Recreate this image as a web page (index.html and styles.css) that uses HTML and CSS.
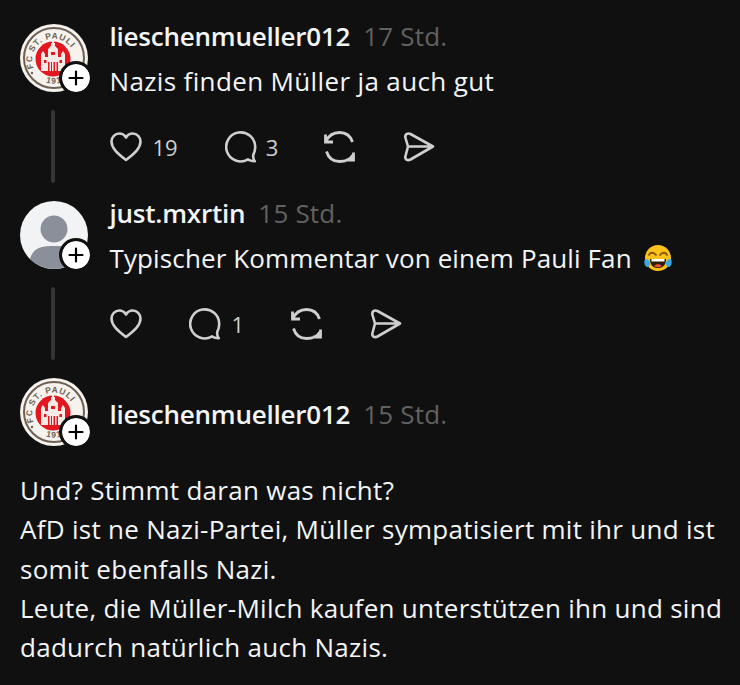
FILE: index.html
```html
<!DOCTYPE html>
<html lang="de">
<head>
<meta charset="utf-8">
<title>Thread</title>
<link rel="stylesheet" href="styles.css">
</head>
<body>
<svg class="defs" width="0" height="0" aria-hidden="true">
  <defs>
    <symbol id="logo" viewBox="0 0 68 68">
      <circle cx="34" cy="34" r="34" fill="#f6f3ee"/>
      <circle cx="34" cy="34" r="30" fill="none" stroke="#6d5f55" stroke-width="2"/>
      <circle cx="33" cy="35" r="17.500" fill="#e2171f"/>
      <path fill="#f7e9e6" d="M21 47V30l2-3 2 3v3h3v-8l3-3v-3h1v-2h2v2h1v3l3 3v8h3v-3l2-3 2 3v17z"/>
      <path fill="#e2171f" d="M28 47v-9h10v9zM24 36h2.500v3H24zM39.500 36H42v3h-2.500zM31 28h4v3h-4z"/>
      <path fill="#f7e9e6" d="M29.500 38h1.500v9h-1.500zM32 38h1.500v9H32zM35 38h1.500v9H35z"/>
      <path id="arc-top" d="M14 45A21.500 21.500 0 1 1 54.500 41" fill="none"/>
      <path id="arc-bottom" d="M18 54A25.500 25.500 0 0 0 50 54" fill="none"/>
      <text class="logo-text"><textPath href="#arc-top" startOffset="1">FC ST. PAULI</textPath></text>
      <text class="logo-text"><textPath href="#arc-bottom" startOffset="9">1910</textPath></text>
      <circle cx="12" cy="49" r="1.200" fill="#6d5f55"/>
    </symbol>
    <symbol id="person" viewBox="0 0 68 68">
      <circle cx="34" cy="34" r="34" fill="#f2f3f5"/>
      <circle cx="34" cy="28" r="13.500" fill="#8a8f9a"/>
      <path fill="#8a8f9a" d="M10 58c3-12 13-13 24-13s21 1 24 13a34 34 0 0 1-48 0z"/>
    </symbol>
    <symbol id="plus" viewBox="0 0 28 28">
      <circle cx="14" cy="14" r="14" fill="#fff"/>
      <path d="M14 7.500v13M7.500 14h13" stroke="#000" stroke-width="2.200" stroke-linecap="round"/>
    </symbol>
    <symbol id="heart" viewBox="0 0 32 30">
      <path d="M16 28C7 21 1.500 16 1.500 9.500 1.500 5 5 1.500 9.300 1.500c2.700 0 5.200 1.400 6.700 4 1.500-2.600 4-4 6.700-4C27 1.500 30.500 5 30.500 9.500 30.500 16 25 21 16 28z" fill="none" stroke="#cfcfcf" stroke-width="2.600" stroke-linejoin="round"/>
    </symbol>
    <symbol id="comment" viewBox="0 0 32 32">
      <path d="M29.800 30.200c-2.600 0-5.300-.4-6.800-1.800A14.500 14.500 0 1 1 30.200 16c0 3-.7 5.500-1.800 7.500-.5 2 0 4.700 1.400 6.700z" fill="none" stroke="#cfcfcf" stroke-width="2.600" stroke-linejoin="round"/>
    </symbol>
    <symbol id="repost" viewBox="0.500 0 32 32">
      <path d="M2 3.500V11H9.500M2 11C5 4.500 10 1.500 16 1.500 22 1.500 27 5 29 11M30 21.500V29H22.500M29.500 24C27 28 22 30.500 16 30.500 10 30.500 5 27 3 20.500" fill="none" stroke="#cfcfcf" stroke-width="2.800" stroke-linecap="butt" stroke-linejoin="miter"/>
    </symbol>
    <symbol id="send" viewBox="1 0 32 32">
      <path d="M30 15.500 7.500 3C4.500 1.500 1.500 3.500 2.500 7L5 15.500 2.500 25C1.500 28.500 4.500 30 7.500 28.500zM5 15.500h25" fill="none" stroke="#cfcfcf" stroke-width="2.600" stroke-linejoin="round"/>
    </symbol>
  </defs>
</svg>

<main class="thread">
  <article class="reply">
    <div class="side">
      <div class="avatar"><svg class="avatar-img"><use href="#logo"/></svg><svg class="badge"><use href="#plus"/></svg></div>
      <div class="connector"></div>
    </div>
    <div class="content">
      <div class="meta"><span class="name">lieschenmueller012</span><span class="time">17 Std.</span></div>
      <p class="text">Nazis finden Müller ja auch gut</p>
      <div class="actions">
        <div class="action"><svg class="icon"><use href="#heart"/></svg><span class="count">19</span></div>
        <div class="action action-comment"><svg class="icon"><use href="#comment"/></svg><span class="count">3</span></div>
        <div class="action"><svg class="icon"><use href="#repost"/></svg></div>
        <div class="action"><svg class="icon"><use href="#send"/></svg></div>
      </div>
    </div>
  </article>

  <article class="reply">
    <div class="side">
      <div class="avatar"><svg class="avatar-img"><use href="#person"/></svg><svg class="badge"><use href="#plus"/></svg></div>
      <div class="connector"></div>
    </div>
    <div class="content">
      <div class="meta"><span class="name">just.mxrtin</span><span class="time">15 Std.</span></div>
      <p class="text text-tight">Typischer Kommentar von einem Pauli Fan
        <svg class="emoji" viewBox="0 0 28 28" role="img" aria-label="😂">
          <circle cx="14" cy="14" r="13" fill="#fcc21b"/>
          <path d="M5 11c1-3 5-3 7 0M16 11c2-3 6-3 7 0" fill="none" stroke="#8a5a10" stroke-width="1.800" stroke-linecap="round"/>
          <path d="M6 15h16c0 6-3 9-8 9s-8-3-8-9z" fill="#2b1a0e"/>
          <path d="M7.500 15h13v2.500h-13z" fill="#fff"/>
          <path d="M10 22c2-2.500 6-2.500 8 0-2 1.500-6 1.500-8 0z" fill="#f0503c"/>
          <path d="M1 15c2 0 5 1 5 4.500S3 24 1.500 22 0 17 1 15zM27 15c-2 0-5 1-5 4.500s3 4.500 4.500 2.500S28 17 27 15z" fill="#3aa9e8"/>
        </svg>
      </p>
      <div class="actions">
        <div class="action"><svg class="icon"><use href="#heart"/></svg></div>
        <div class="action action-comment"><svg class="icon"><use href="#comment"/></svg><span class="count count-one">1</span></div>
        <div class="action"><svg class="icon"><use href="#repost"/></svg></div>
        <div class="action"><svg class="icon"><use href="#send"/></svg></div>
      </div>
    </div>
  </article>

  <article class="post">
    <header class="post-head">
      <div class="avatar"><svg class="avatar-img"><use href="#logo"/></svg><svg class="badge"><use href="#plus"/></svg></div>
      <div class="meta"><span class="name">lieschenmueller012</span><span class="time">15 Std.</span></div>
    </header>
    <p class="body">Und? Stimmt daran was nicht?<br>AfD ist ne Nazi-Partei, Müller sympatisiert mit ihr und ist<br>somit ebenfalls Nazi.<br>Leute, die Müller-Milch kaufen unterstützen ihn und sind<br>dadurch natürlich auch Nazis.</p>
  </article>
</main>
</body>
</html>
```
FILE: styles.css
```css
* { box-sizing: border-box; }
html, body { margin: 0; height: 100%; }
body {
  background: #101010;
  color: #f3f5f7;
  font-family: "Open Sans", "Noto Sans", sans-serif;
  overflow: hidden;
}
.defs { display: block; height: 0; }
.thread { padding: 24px 0 0 20px; }
.reply {
  display: grid;
  grid-template-columns: 89.500px 1fr;
  height: 177px;
}
.side { display: flex; flex-direction: column; }
.avatar { position: relative; width: 68px; height: 68px; flex: none; }
.avatar-img { display: block; width: 68px; height: 68px; }
.badge {
  position: absolute;
  left: 39px;
  top: 37px;
  width: 34px;
  height: 34px;
  padding: 3px;
  border-radius: 50%;
  background: #101010;
}
.connector {
  width: 4px;
  height: 73px;
  margin: 18px 0 0 31px;
  border-radius: 2px;
  background: #333638;
}
.content { display: flex; flex-direction: column; margin-top: -2px; }
.meta { display: flex; align-items: baseline; gap: 13px; height: 28px; }
.name { font-size: 26px; font-weight: 600; line-height: 28px; letter-spacing: -.22px; }
.time { font-size: 26px; line-height: 28px; color: #616161; letter-spacing: .2px; }
.text {
  display: flex;
  align-items: center;
  gap: 0 12px;
  margin: 14px 0 0;
  font-size: 26px;
  line-height: 34px;
  letter-spacing: .36px;
  white-space: nowrap;
}
.text-tight { letter-spacing: .12px; }
.emoji { width: 28px; height: 28px; flex: none; }
.actions { display: flex; gap: 46px; margin-top: 33px; height: 32px; align-items: center; }
.action { display: flex; align-items: center; gap: 11px; }
.action:first-child { margin-right: 1px; }
.action:last-child { margin-left: 2px; }
.action-comment { gap: 9px; }
.icon { display: block; width: 32px; height: 32px; }
.count { font-size: 22px; color: #cfcfcf; line-height: 32px; }
.count-one { margin: 0 1px 0 2px; }
.post-head { display: flex; align-items: center; gap: 21.500px; }
.post-head .meta { margin-top: 4px; }
.body {
  margin: 25px 0 0;
  font-size: 26px;
  line-height: 39.300px;
  letter-spacing: .28px;
  white-space: nowrap;
}
.logo-text {
  font-family: "Liberation Sans", sans-serif;
  font-size: 8.500px;
  font-weight: 700;
  fill: #6d5f55;
  letter-spacing: .8px;
}
```
